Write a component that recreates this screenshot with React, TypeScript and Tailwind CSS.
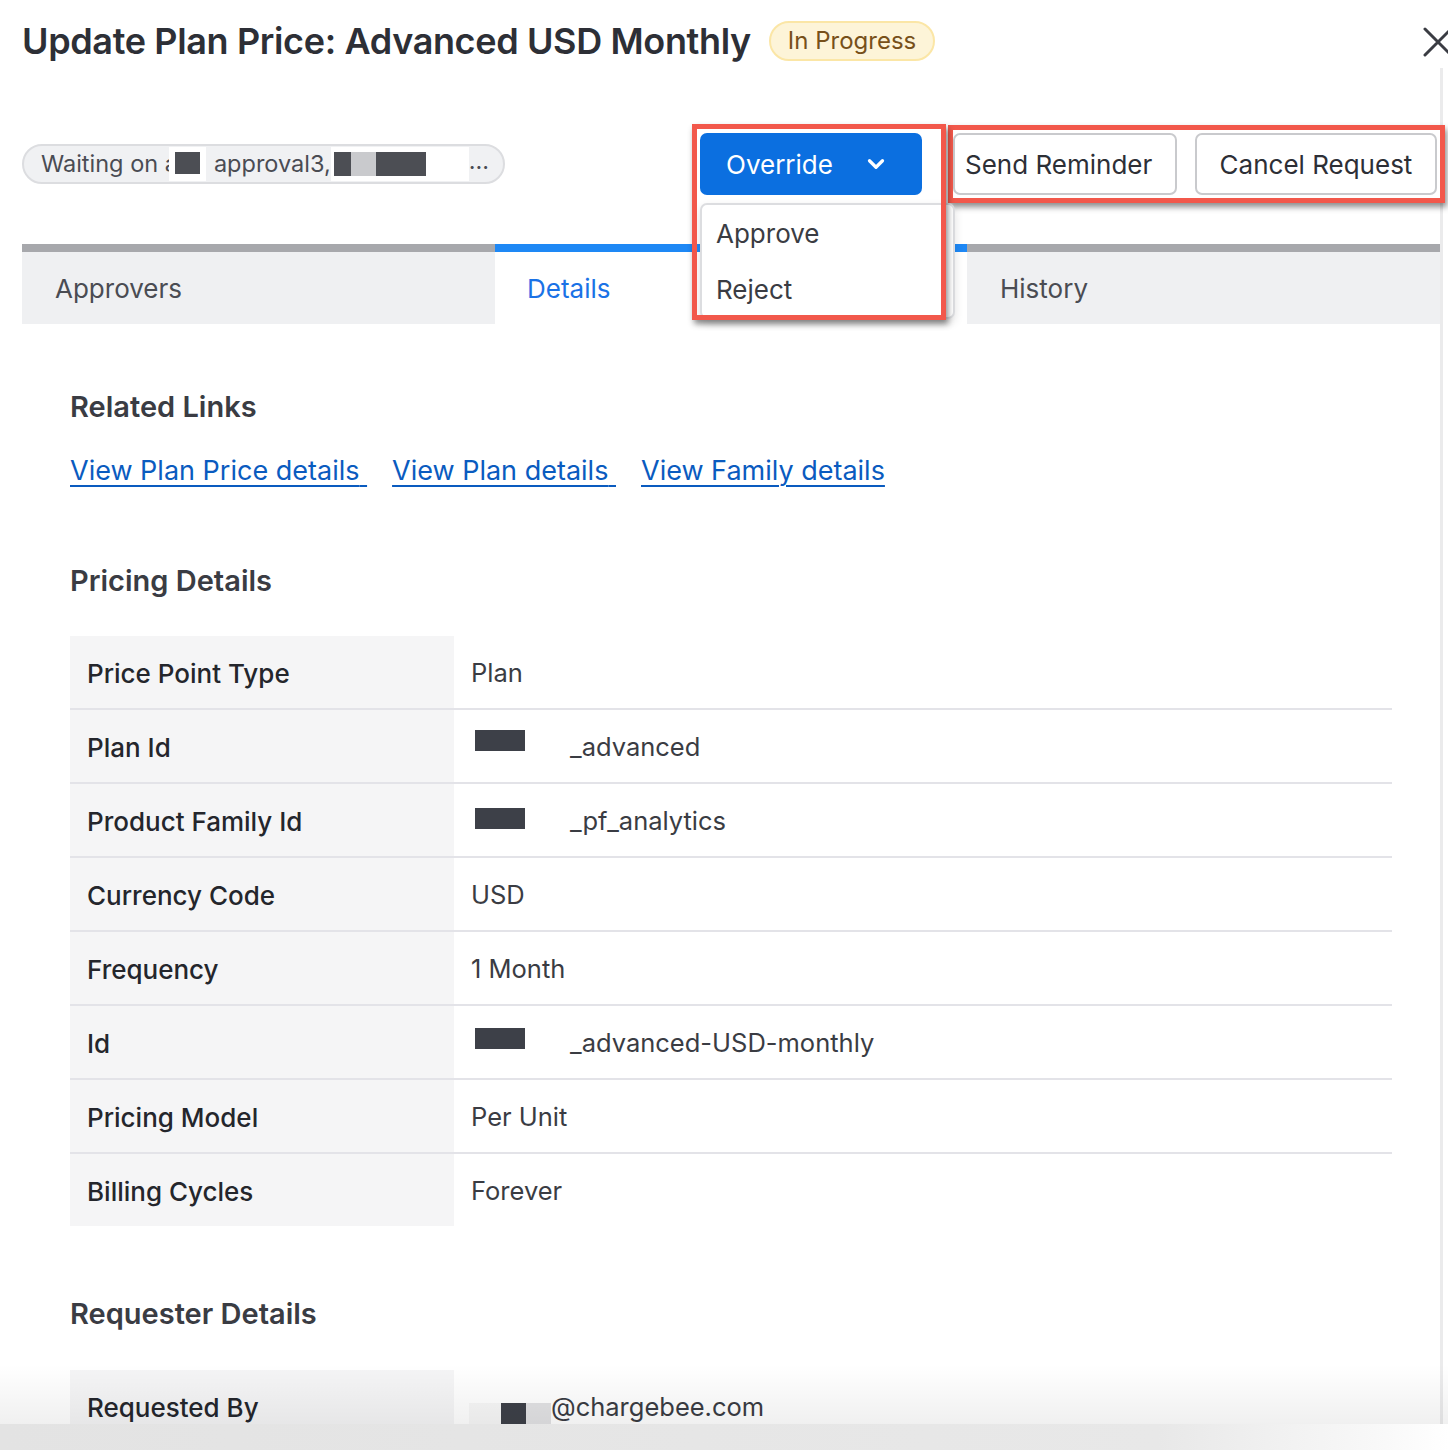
import { ChevronDown } from 'lucide-react';

const rows: { label: string; value: string; redact?: string }[] = [
  { label: 'Price Point Type', value: 'Plan' },
  { label: 'Plan Id', value: '_advanced', redact: 'mb-[14px]' },
  { label: 'Product Family Id', value: '_pf_analytics', redact: 'mb-[6px]' },
  { label: 'Currency Code', value: 'USD' },
  { label: 'Frequency', value: '1 Month' },
  { label: 'Id', value: '_advanced-USD-monthly', redact: 'mb-[10px]' },
  { label: 'Pricing Model', value: 'Per Unit' },
  { label: 'Billing Cycles', value: 'Forever' },
];

function Block({ className }: { className: string }) {
  return <span className={`inline-block shrink-0 ${className}`} />;
}

export default function App() {
  return (
    <div className="relative w-[1448px] h-[1450px] overflow-hidden bg-[#e6e6e6] font-['Inter','Liberation_Sans',sans-serif]">
      <div className="relative h-[1424px] overflow-hidden bg-white">
        {/* scroll track */}
        <div className="absolute left-[1440px] top-[68px] w-[3px] h-[1360px] bg-[#ebebec]" />

        {/* header */}
        <div className="flex items-center pl-[22px] pt-[19px] h-[63px]">
          <h1 className="text-[36px] leading-[44px] font-semibold tracking-[-0.01em] text-[#2d2f36] whitespace-nowrap">Update Plan Price: Advanced USD Monthly</h1>
          <span className="ml-[18px] h-[40px] px-[17px] flex items-center rounded-full bg-[#fdf4d8] border-2 border-[#fbe6a6] text-[24px] text-[#77501a]">In Progress</span>
          <svg className="ml-auto mr-[-6px] mt-[2px]" width="32" height="32" viewBox="0 0 32 32" fill="none" stroke="#3a3c43" strokeWidth="3" strokeLinecap="round">
            <path d="M3 3 L29 29 M29 3 L3 29" />
          </svg>
        </div>

        {/* actions row */}
        <div className="flex items-center pl-[22px] pr-[11px] mt-[70px] h-[62px]">
          <div className="h-[40px] w-[483px] flex items-center rounded-full bg-[#f0f1f3] border-2 border-[#dcdde0] pl-[17px] text-[23.5px] text-[#4a4c53] whitespace-nowrap overflow-hidden">
            <span>Waiting on a</span>
            <span className="-ml-[9px] w-[37px] h-[34px] bg-white flex items-center pl-[6px]"><Block className="w-[25px] h-[22px] bg-[#4c4e54] mb-[2px]" /></span>
            <span className="ml-[8px]">approval3,</span>
            <span className="w-[138px] h-[34px] bg-white flex items-center pl-[3px]">
              <Block className="w-[17px] h-[24px] bg-[#4c4e54]" />
              <Block className="w-[25px] h-[24px] bg-[#c9cacd]" />
              <Block className="w-[50px] h-[24px] bg-[#4c4e54]" />
            </span>
            <span className="mb-[6px]">...</span>
          </div>

          <div className="ml-auto flex items-center">
            <div className="relative">
              <button className="w-[222px] h-[62px] rounded-[7px] bg-[#0b6fe0] text-white text-[26px] flex items-center justify-between pl-[26px] pr-[33px]">
                <span>Override</span>
                <ChevronDown size={26} strokeWidth={3} />
              </button>
              {/* dropdown menu */}
              <div className="absolute left-0 top-[70px] w-[255px] h-[116px] z-20 bg-white border-2 border-[#dcdde0] rounded-[7px] shadow-[0_4px_10px_rgba(0,0,0,0.12)]">
                <div className="h-[56px] flex items-center pl-[14px] text-[26px] text-[#3a3c43]">Approve</div>
                <div className="h-[56px] flex items-center pl-[14px] text-[26px] text-[#3a3c43]">Reject</div>
              </div>
              {/* highlight */}
              <div className="absolute left-[-8px] top-[-9px] w-[254px] h-[196px] z-30 border-[5px] border-[#f2584b] shadow-[2px_4px_6px_rgba(0,0,0,0.45)]" />
            </div>

            <div className="relative flex items-center ml-[31px] gap-[18px]">
              <button className="w-[224px] h-[62px] rounded-[7px] bg-white border-2 border-[#c9cacd] text-[26px] text-[#2d2f36] text-left pl-[10px]">Send Reminder</button>
              <button className="w-[242px] h-[62px] rounded-[7px] bg-white border-2 border-[#c9cacd] text-[26px] text-[#2d2f36]">Cancel Request</button>
              <div className="absolute left-[-5px] top-[-8px] w-[497px] h-[78px] border-[5px] border-[#f2584b] shadow-[2px_4px_6px_rgba(0,0,0,0.45)]" />
            </div>
          </div>
        </div>

        {/* tabs */}
        <div className="flex ml-[22px] w-[1418px] mt-[49px]">
          <div className="flex-1 h-[80px] border-t-8 border-[#a7a8ac] bg-[#eff0f2] flex items-center pl-[33px] text-[26px] text-[#4a4c53]">Approvers</div>
          <div className="flex-1 h-[80px] border-t-8 border-[#1e88f5] bg-white flex items-center pl-[32px] text-[26px] text-[#1a72e6]">Details</div>
          <div className="flex-1 h-[80px] border-t-8 border-[#a7a8ac] bg-[#eff0f2] flex items-center pl-[33px] text-[26px] text-[#4a4c53]">History</div>
        </div>

        {/* content */}
        <div className="pl-[70px] pr-[56px]">
          <h2 className="mt-[65px] text-[29px] leading-[36px] font-semibold text-[#3a3c43]">Related Links</h2>
          <div className="mt-[29px] flex gap-[25px] text-[27px] leading-[34px] text-[#0a5bbf]">
            <a className="underline underline-offset-[5px] decoration-2">View Plan Price details{'\u00a0'}</a>
            <a className="underline underline-offset-[5px] decoration-2">View Plan details{'\u00a0'}</a>
            <a className="underline underline-offset-[5px] decoration-2">View Family details</a>
          </div>

          <h2 className="mt-[75px] text-[29px] leading-[36px] font-semibold text-[#3a3c43]">Pricing Details</h2>
          <div className="mt-[37px]">
            {rows.map((r, i) => (
              <div key={r.label} className={`flex ${i < rows.length - 1 ? 'h-[74px] border-b-2 border-[#e3e3e8]' : 'h-[72px]'}`}>
                <div className="w-[384px] bg-[#f5f5f6] flex items-center pl-[17px] pt-[2px] text-[26px] font-medium text-[#24262c]">{r.label}</div>
                <div className="flex-1 flex items-center pl-[17px] pt-[2px] text-[25.5px] text-[#3a3c43]">
                  {r.redact && <Block className={`w-[50px] h-[21px] bg-[#3d4048] ml-[4px] mr-[45px] ${r.redact}`} />}
                  <span>{r.value}</span>
                </div>
              </div>
            ))}
          </div>

          <h2 className="mt-[70px] text-[29px] leading-[36px] font-semibold text-[#3a3c43]">Requester Details</h2>
          <div className="mt-[38px] flex h-[74px]">
            <div className="w-[384px] bg-[#f5f5f6] flex items-center pl-[17px] text-[26px] font-medium text-[#24262c]">Requested By</div>
            <div className="flex-1 flex items-center pl-[15px] text-[25.5px] text-[#3a3c43]">
              <span className="w-[82px] h-[30px] mt-[22px] flex items-start bg-[#f7f7f7]">
                <Block className="ml-[32px] w-[25px] h-[30px] bg-[#3d4048]" />
                <Block className="w-[25px] h-[30px] bg-[#e2e2e4]" />
              </span>
              <span>@chargebee.com</span>
            </div>
          </div>
        </div>

        {/* bottom fade */}
        <div className="pointer-events-none absolute left-0 bottom-0 w-full h-[60px] bg-[linear-gradient(to_bottom,rgba(0,0,0,0)_0%,rgba(0,0,0,0.06)_100%)]" />
      </div>
      <div className="h-[26px] bg-[linear-gradient(to_right,#e3e3e3_0%,#e8e8e8_80%,#f8f8f8_95%,#ffffff_100%)]" />
    </div>
  );
}
